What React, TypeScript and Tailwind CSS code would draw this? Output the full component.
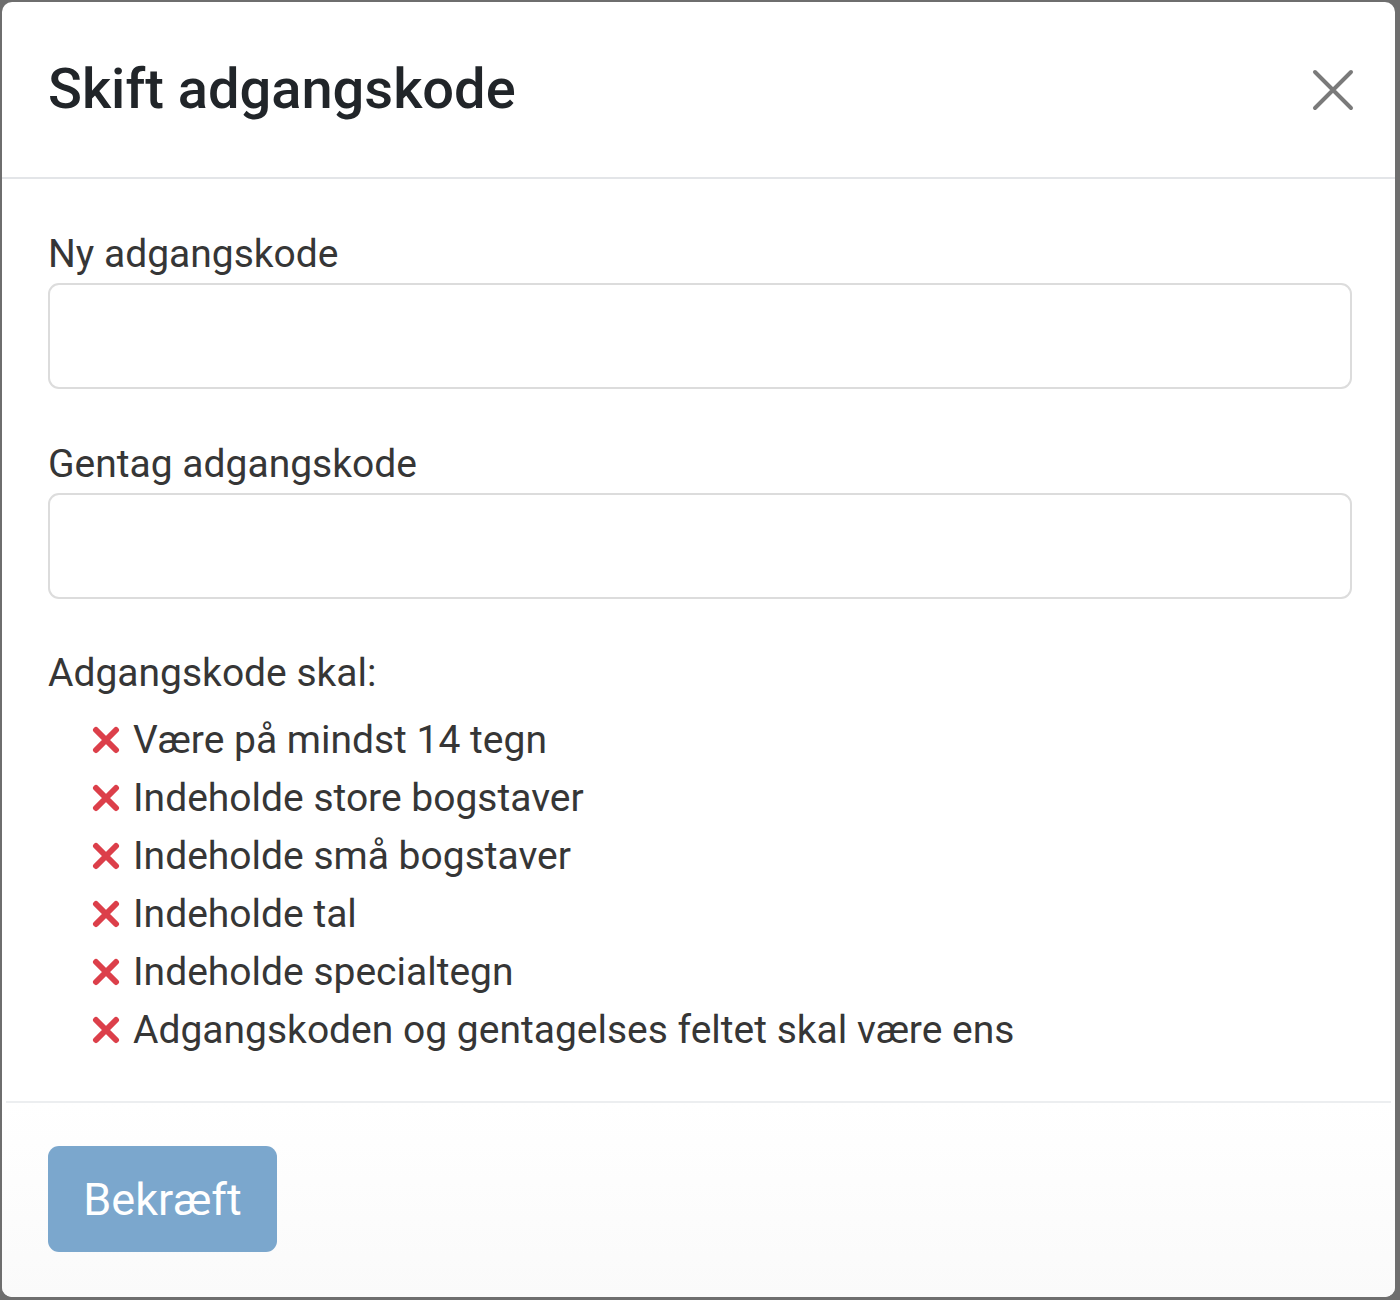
import React from "react";

const rules = [
  "Være på mindst 14 tegn",
  "Indeholde store bogstaver",
  "Indeholde små bogstaver",
  "Indeholde tal",
  "Indeholde specialtegn",
  "Adgangskoden og gentagelses feltet skal være ens",
];

function RedX() {
  return (
    <svg width="28" height="28" viewBox="0 0 28 28" className="shrink-0">
      <path d="M4 4 L24 24 M24 4 L4 24" stroke="#dc3f4a" strokeWidth="6" strokeLinecap="round" />
    </svg>
  );
}

export default function App() {
  return (
    <div className="w-[1400px] h-[1300px] bg-[#6e6e6e] pl-[2px] pt-[2px] pr-[5px] pb-[3px]" style={{ fontFamily: "Roboto, 'Liberation Sans', sans-serif" }}>
      <div className="w-full h-full bg-white rounded-[10px] flex flex-col">
        <div className="h-[177px] shrink-0 border-b-2 border-[#e3e5e8] flex items-center justify-between pl-[46px] pr-[40px]">
          <h1 className="text-[56px] font-medium text-[#212529] leading-none -mt-[1px]">Skift adgangskode</h1>
          <svg width="44" height="44" viewBox="0 0 44 44">
            <path d="M4 4 L40 40 M40 4 L4 40" stroke="#7a7a7a" strokeWidth="4" strokeLinecap="round" />
          </svg>
        </div>
        <div className="flex-1 pl-[46px] pr-[43px] pt-[51px]">
          <label className="block text-[39px] text-[#363636] leading-[48px]">Ny adgangskode</label>
          <div className="mt-[5px] h-[106px] rounded-[11px] border-2 border-[#dcdcdc]" />
          <label className="block mt-[51px] text-[39px] text-[#363636] leading-[48px]">Gentag adgangskode</label>
          <div className="mt-[5px] h-[106px] rounded-[11px] border-2 border-[#dcdcdc]" />
          <p className="mt-[50px] text-[39px] text-[#363636] leading-[48px]">Adgangskode skal:</p>
          <ul className="mt-[14px] pl-[44px]">
            {rules.map((r) => (
              <li key={r} className="flex items-center gap-[13px] h-[58px] text-[39px] text-[#363636]">
                <RedX />
                <span>{r}</span>
              </li>
            ))}
          </ul>
        </div>
        <div className="mx-[4px] h-[2px] bg-[#eceef0] shrink-0" />
        <div className="h-[194px] shrink-0 px-[46px] pt-[43px] bg-gradient-to-b from-white to-[#fafafa] rounded-b-[10px]">
          <button className="w-[229px] h-[106px] rounded-[11px] bg-[#7ba7cd] text-white text-[45px] leading-none">Bekræft</button>
        </div>
      </div>
    </div>
  );
}
